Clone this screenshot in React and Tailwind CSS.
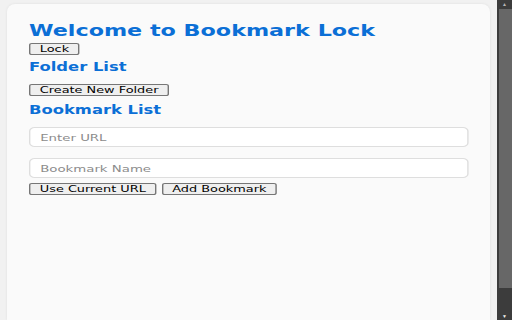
import React from "react";

// the popup is shown stretched sideways, so the content column is drawn narrow and scaled on x
const Btn = ({ children }) => (
  <button className="h-[12px] px-[6.7px] border border-[#767676] bg-[#efefef] rounded-[2px] text-[9.2px] leading-[10px] text-black font-['DejaVu_Sans',sans-serif]">
    {children}
  </button>
);

const Field = ({ placeholder, className }) => (
  <input
    className={`block w-full h-[20px] px-[7px] bg-white border border-[#dedede] rounded-[4px] text-[9.5px] text-black placeholder:text-[#8c8c8c] font-['DejaVu_Sans',sans-serif] outline-none ${className}`}
    placeholder={placeholder}
  />
);

const App = () => {
  return (
    <div className="flex w-[512px] h-[320px] overflow-hidden bg-[#f1f1f1]">
      <div className="w-[497px] pt-[4px] pl-[7px] pr-[7px]">
        <div className="h-full bg-[#fafafa] rounded-t-[8px] shadow-[0_0_3px_rgba(0,0,0,0.08)] pl-[22px] pt-[17px]">
          <div className="w-[314px] origin-left scale-x-[1.4] font-['DejaVu_Sans',sans-serif]">
            <h1 className="h-[19px] text-[15.9px] leading-[19px] font-bold text-[#0b6fd6] whitespace-nowrap">
              Welcome to Bookmark Lock
            </h1>
            <div className="mt-[3px] flex">
              <Btn>Lock</Btn>
            </div>
            <h2 className="mt-[5px] text-[11.7px] leading-[14px] font-bold text-[#0b6fd6]">
              Folder List
            </h2>
            <div className="mt-[10px] flex">
              <Btn>Create New Folder</Btn>
            </div>
            <h2 className="mt-[7px] text-[11.7px] leading-[14px] font-bold text-[#0b6fd6]">
              Bookmark List
            </h2>
            <Field className="mt-[10px]" placeholder="Enter URL" />
            <Field className="mt-[11px]" placeholder="Bookmark Name" />
            <div className="mt-[5px] flex gap-[3.5px]">
              <Btn>Use Current URL</Btn>
              <Btn>Add Bookmark</Btn>
            </div>
          </div>
        </div>
      </div>
      <div className="w-[15px] h-full bg-[#3c3c3c] flex flex-col items-end">
        <div className="w-full h-[9px] flex items-center justify-center text-[#b5b5b5] text-[5px] leading-none">▲</div>
        <div className="w-[13px] h-[279px] bg-[#676767]" />
        <div className="flex-1" />
        <div className="w-full h-[8px] flex items-center justify-center text-[#eeeeee] text-[5px] leading-none">▼</div>
      </div>
    </div>
  );
};

export default App;
